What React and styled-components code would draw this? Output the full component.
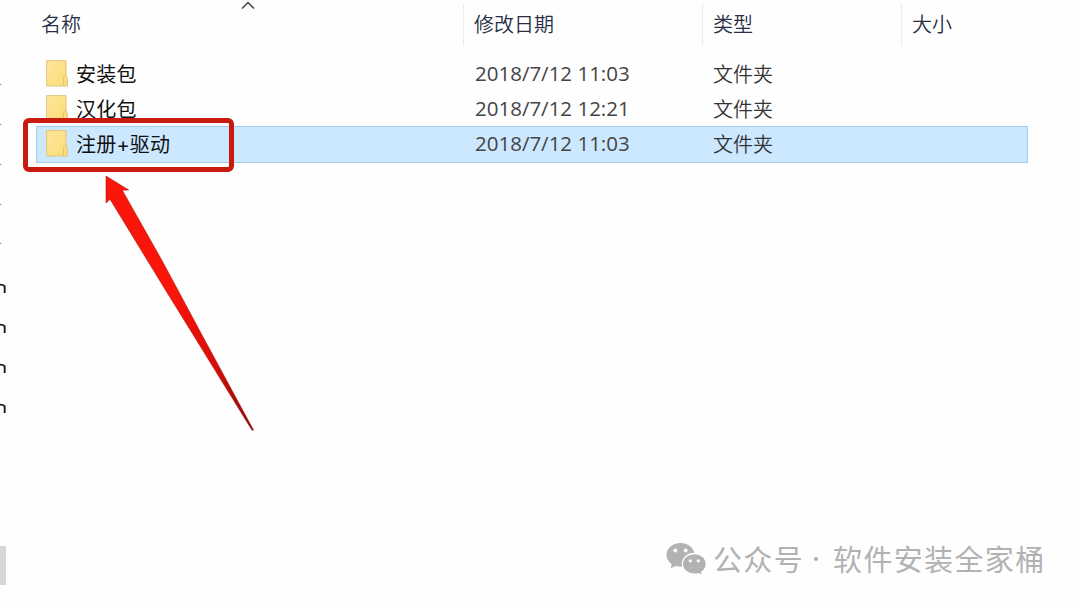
import React from "react";
import styled, { createGlobalStyle } from "styled-components";

const files = [
  { id: 1, name: "安装包", date: "2018/7/12 11:03", type: "文件夹" },
  { id: 2, name: "汉化包", date: "2018/7/12 12:21", type: "文件夹" },
  {
    id: 3,
    name: "注册+驱动",
    date: "2018/7/12 11:03",
    type: "文件夹",
    selected: true,
  },
];

const FolderIcon = () => (
  <svg width="22" height="27" viewBox="0 0 22 27">
    <defs>
      <linearGradient id="folder" x1="0" y1="0" x2="1" y2="1">
        <stop offset="0" stopColor="#ffe79a" />
        <stop offset="1" stopColor="#fbdb78" />
      </linearGradient>
    </defs>
    <path
      d="M0.6 0.6H20V14L21.5 20V26H0.6Z"
      fill="url(#folder)"
      stroke="#e0c274"
      strokeWidth="0.9"
    />
    <path
      d="M17.5 25.5V17.5L20 14"
      fill="none"
      stroke="#e3bf5e"
      strokeWidth="0.9"
    />
  </svg>
);

const WechatIcon = () => (
  <svg width="42" height="34" viewBox="0 0 42 34">
    <path
      d="M14.6 1C6.7 1 0.5 6.2 0.5 12.9C0.5 16.7 2.4 19.7 5.6 21.9L4.8 26.2L9.7 23.9C11.3 24.4 13 24.7 14.6 24.7C22.5 24.7 28.5 19.5 28.5 12.9C28.5 6.2 22.5 1 14.6 1Z"
      fill="#b2b2b2"
    />
    <path
      d="M28.4 11.5C21.6 11.5 16.4 16 16.4 21.9C16.4 27.9 21.6 32.2 28.4 32.2C29.9 32.2 31.3 32 32.6 31.6L36.5 33.3L35.8 30C38.8 28.1 40.3 25.3 40.3 21.9C40.3 16 35.2 11.5 28.4 11.5Z"
      fill="#b2b2b2"
      stroke="#fff"
      strokeWidth="1.3"
    />
    <circle cx="9.3" cy="8.5" r="1.9" fill="#fff" />
    <circle cx="19.7" cy="8.5" r="1.9" fill="#fff" />
    <circle cx="24.3" cy="18.8" r="1.6" fill="#fff" />
    <circle cx="32.3" cy="18.8" r="1.6" fill="#fff" />
  </svg>
);

export default function App() {
  return (
    <Page>
      <GlobalStyle />
      <NavPane>
        <svg width="8" height="340" viewBox="0 0 8 340">
          {[4, 44, 84, 124, 163].map((y) => (
            <path key={y} d={`M0 ${y}l1.2 0.8`} stroke="#777" />
          ))}
          {[205, 245, 285, 325].map((y) => (
            <path
              key={y}
              d={`M-1 ${y - 0.4}Q3.5 ${y - 0.5} 4.7 ${y + 1.2}V${y + 8}`}
              fill="none"
              stroke="#1c1c1c"
              strokeWidth="1.9"
            />
          ))}
        </svg>
        <ScrollThumb />
      </NavPane>

      <FileList>
        <HeaderRow>
          <HeaderCell $first>
            名称
            <SortMark width="14" height="10" viewBox="0 0 14 10">
              <path
                d="M1 8.5L7 2.5L13 8.5"
                fill="none"
                stroke="#444"
                strokeWidth="1.5"
              />
            </SortMark>
          </HeaderCell>
          <HeaderCell>修改日期</HeaderCell>
          <HeaderCell>类型</HeaderCell>
          <HeaderCell>大小</HeaderCell>
        </HeaderRow>
        {files.map((file) => (
          <FileRow key={file.id} $selected={file.selected}>
            <NameCell>
              <FolderIcon />
              <FileName>{file.name}</FileName>
            </NameCell>
            <DateCell>{file.date}</DateCell>
            <TypeCell>{file.type}</TypeCell>
          </FileRow>
        ))}
      </FileList>

      <Highlight />
      <Arrow width="150" height="257" viewBox="0 0 150 257">
        <defs>
          <linearGradient
            id="arrow"
            gradientUnits="userSpaceOnUse"
            x1="0"
            y1="0"
            x2="148"
            y2="255"
          >
            <stop offset="0" stopColor="#fb160c" />
            <stop offset="0.45" stopColor="#fa150b" />
            <stop offset="0.75" stopColor="#d80c08" />
            <stop offset="1" stopColor="#7d0c0c" />
          </linearGradient>
        </defs>
        <path
          d="M1 1L23.7 15L17.3 15.2L57 85.5L97 160L148.5 255L147 255.3L88.3 160L61.5 116.7L5 24.3L1 28Z"
          fill="url(#arrow)"
          stroke="#b51a12"
          strokeWidth="0.6"
        />
      </Arrow>

      <Watermark>
        <WechatIcon />
        <span>公众号</span>
        <Dot />
        <span>软件安装全家桶</span>
      </Watermark>
    </Page>
  );
}

const GlobalStyle = createGlobalStyle`
  body {
    margin: 0;
    background-color: #fefefe;
  }
`;

const Page = styled.div`
  position: relative;
  display: flex;
  width: 1080px;
  height: 603px;
  overflow: hidden;
  background-color: #fefefe;
  font-family: "Open Sans", "Noto Sans CJK SC", sans-serif;
`;

const NavPane = styled.div`
  display: flex;
  flex-direction: column;
  justify-content: space-between;
  box-sizing: border-box;
  width: 36px;
  padding: 80px 0 18px;
`;

const ScrollThumb = styled.div`
  width: 6px;
  height: 39px;
  background-color: #d6d6d6;
`;

const FileList = styled.div`
  width: 992px;
`;

const HeaderRow = styled.div`
  display: grid;
  grid-template-columns: 427px 239px 199px 1fr;
  height: 42px;
  padding: 4px 0 10px;
`;

const HeaderCell = styled.div`
  position: relative;
  padding-left: ${({ $first }) => ($first ? "5px" : "10px")};
  border-left: ${({ $first }) => ($first ? "none" : "1px solid #ebebeb")};
  color: #2a2e45;
  font-family: "Noto Sans CJK SC", sans-serif;
  font-size: 20px;
  font-weight: 350;
  line-height: 39px;
`;

const SortMark = styled.svg`
  position: absolute;
  top: -4px;
  left: 205px;
`;

const FileRow = styled.div`
  display: grid;
  grid-template-columns: 438px 238px 1fr;
  align-items: center;
  box-sizing: border-box;
  height: ${({ $selected }) => ($selected ? "37px" : "35px")};
  border: ${({ $selected }) => ($selected ? "1px solid #a3cdec" : "none")};
  padding: ${({ $selected }) => ($selected ? "0 0 2px" : "0 1px")};
  background-color: ${({ $selected }) =>
    $selected ? "#cce8ff" : "transparent"};
  white-space: nowrap;
`;

const NameCell = styled.div`
  display: flex;
  align-items: center;
  gap: 8px;
  padding-left: 9px;
`;

const FileName = styled.span`
  padding-top: 2px;
  color: #111;
  font-family: Inter, "Noto Sans CJK SC", sans-serif;
  font-size: 20px;
  letter-spacing: 0.2px;
  line-height: 28px;
`;

const DateCell = styled.div`
  padding-bottom: 2px;
  color: #444;
  font-size: 20.5px;
  line-height: 30px;
`;

const TypeCell = styled.div`
  color: #333;
  font-family: "Noto Sans CJK SC", sans-serif;
  font-size: 20px;
  font-weight: 350;
  line-height: 30px;
`;

const Highlight = styled.div`
  position: absolute;
  top: 118px;
  left: 23px;
  box-sizing: border-box;
  width: 211px;
  height: 54px;
  border: 5px solid #c91a10;
  border-radius: 6px;
`;

const Arrow = styled.svg`
  position: absolute;
  top: 175px;
  left: 105px;
`;

const Watermark = styled.div`
  position: absolute;
  top: 542px;
  left: 666px;
  display: flex;
  align-items: center;
  height: 34px;
  color: #b2b2b2;
  font-family: "Noto Sans CJK SC", sans-serif;
  font-size: 29px;
  letter-spacing: 1.35px;
  white-space: nowrap;

  svg {
    margin-right: 5px;
  }

  span {
    padding-bottom: 2px;
  }
`;

const Dot = styled.i`
  width: 4px;
  height: 4px;
  margin: 0 15px 0 10px;
  border-radius: 50%;
  background-color: #b2b2b2;
`;
